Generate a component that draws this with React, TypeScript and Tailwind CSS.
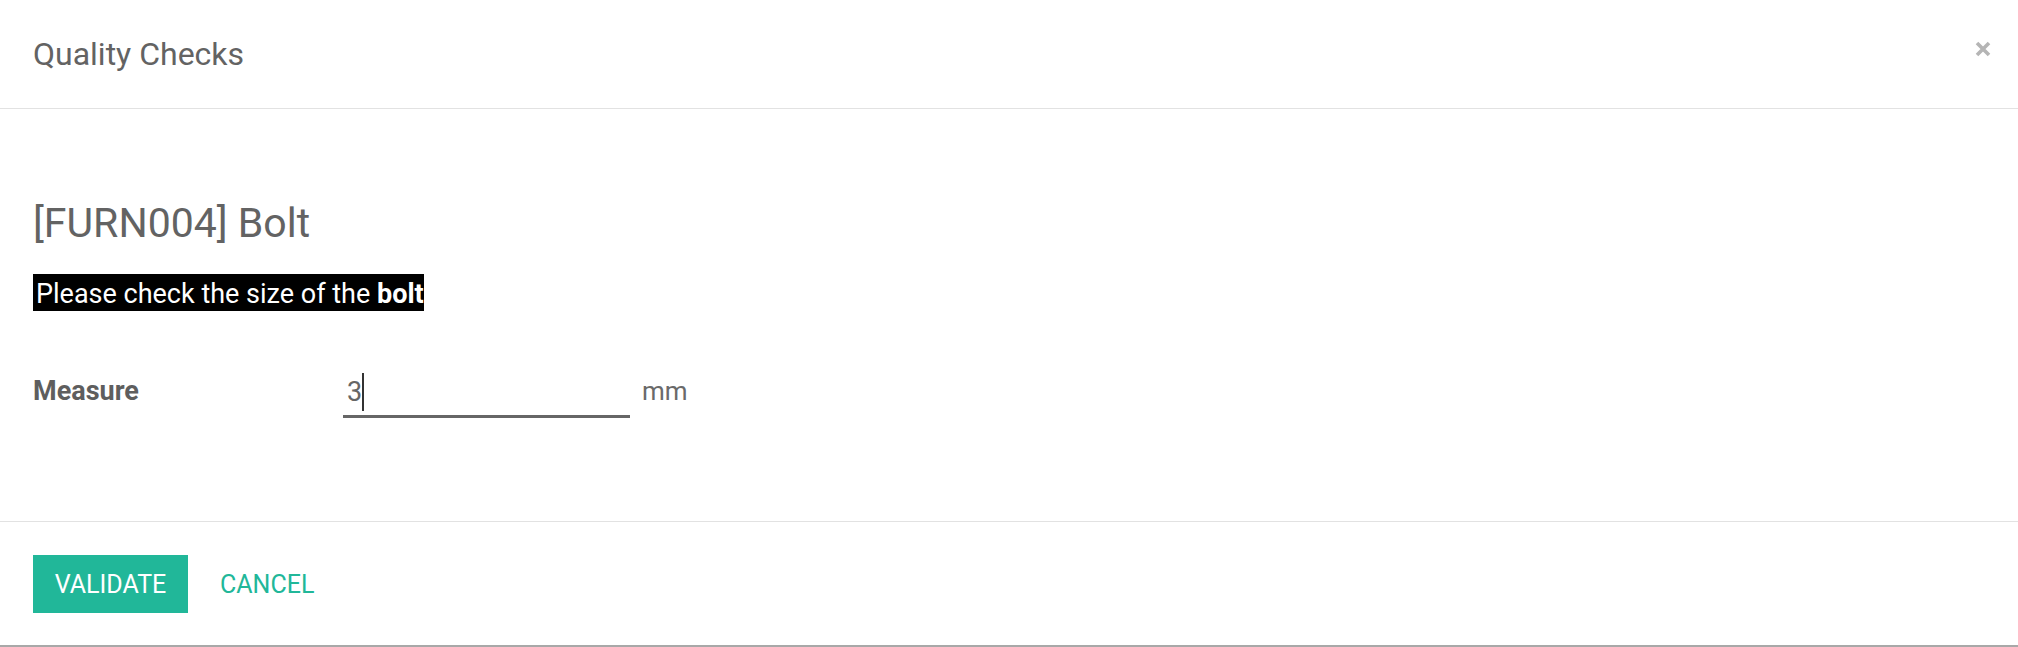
import React from 'react'

const font = { fontFamily: 'Roboto, "Liberation Sans", sans-serif' }

function App() {
  return (
    <div className="w-[2018px] h-[647px] bg-white flex flex-col text-[#666666]" style={font}>
      {/* header */}
      <div className="h-[109px] shrink-0 flex items-center justify-between pl-[33px] pr-[27px] border-b border-[#e2e2e2]">
        <h4 className="text-[32px] leading-[32px] text-[#636363]">Quality Checks</h4>
        <button className="w-[16px] h-[16px] -mt-[10px]" aria-label="close">
          <svg width="16" height="16" viewBox="0 0 16 16">
            <path d="M2 2 L14 14 M14 2 L2 14" stroke="#b5b5b5" strokeWidth="3.6" strokeLinecap="butt" />
          </svg>
        </button>
      </div>

      {/* body */}
      <div className="h-[412px] shrink-0 pl-[33px] pt-[92px]">
        <h2 className="text-[41px] leading-[44px] text-[#636363]">[FURN004] Bolt</h2>
        <div className="mt-[29px]">
          <span className="inline-block bg-black text-white text-[27px] leading-[34px] pt-[3px] pl-[3px]">
            Please check the size of the <b>bolt</b>
          </span>
        </div>

        <div className="mt-[60px] flex items-start">
          <label className="w-[310px] text-[27px] leading-[40px] font-bold text-[#5e5e5e]">Measure</label>
          <div className="w-[287px] h-[47px] border-b-[3px] border-[#666666] flex items-start pl-[4px] pt-[2px]">
            <span className="text-[27px] leading-[38px] text-[#666666]">3</span>
            <span className="w-[2px] h-[38px] bg-[#333333]"></span>
          </div>
          <span className="ml-[12px] text-[26px] leading-[40px] text-[#6a6a6a]">mm</span>
        </div>
      </div>

      {/* footer */}
      <div className="flex-1 border-t border-b-2 border-t-[#e2e2e2] border-b-[#a8a8a8] pl-[33px] pt-[33px]">
        <div className="flex items-center">
          <button className="h-[58px] w-[155px] bg-[#21b799] text-white text-[25px] leading-none">VALIDATE</button>
          <button className="ml-[32px] text-[25px] leading-none text-[#21b799]">CANCEL</button>
        </div>
      </div>
    </div>
  )
}

export default App
